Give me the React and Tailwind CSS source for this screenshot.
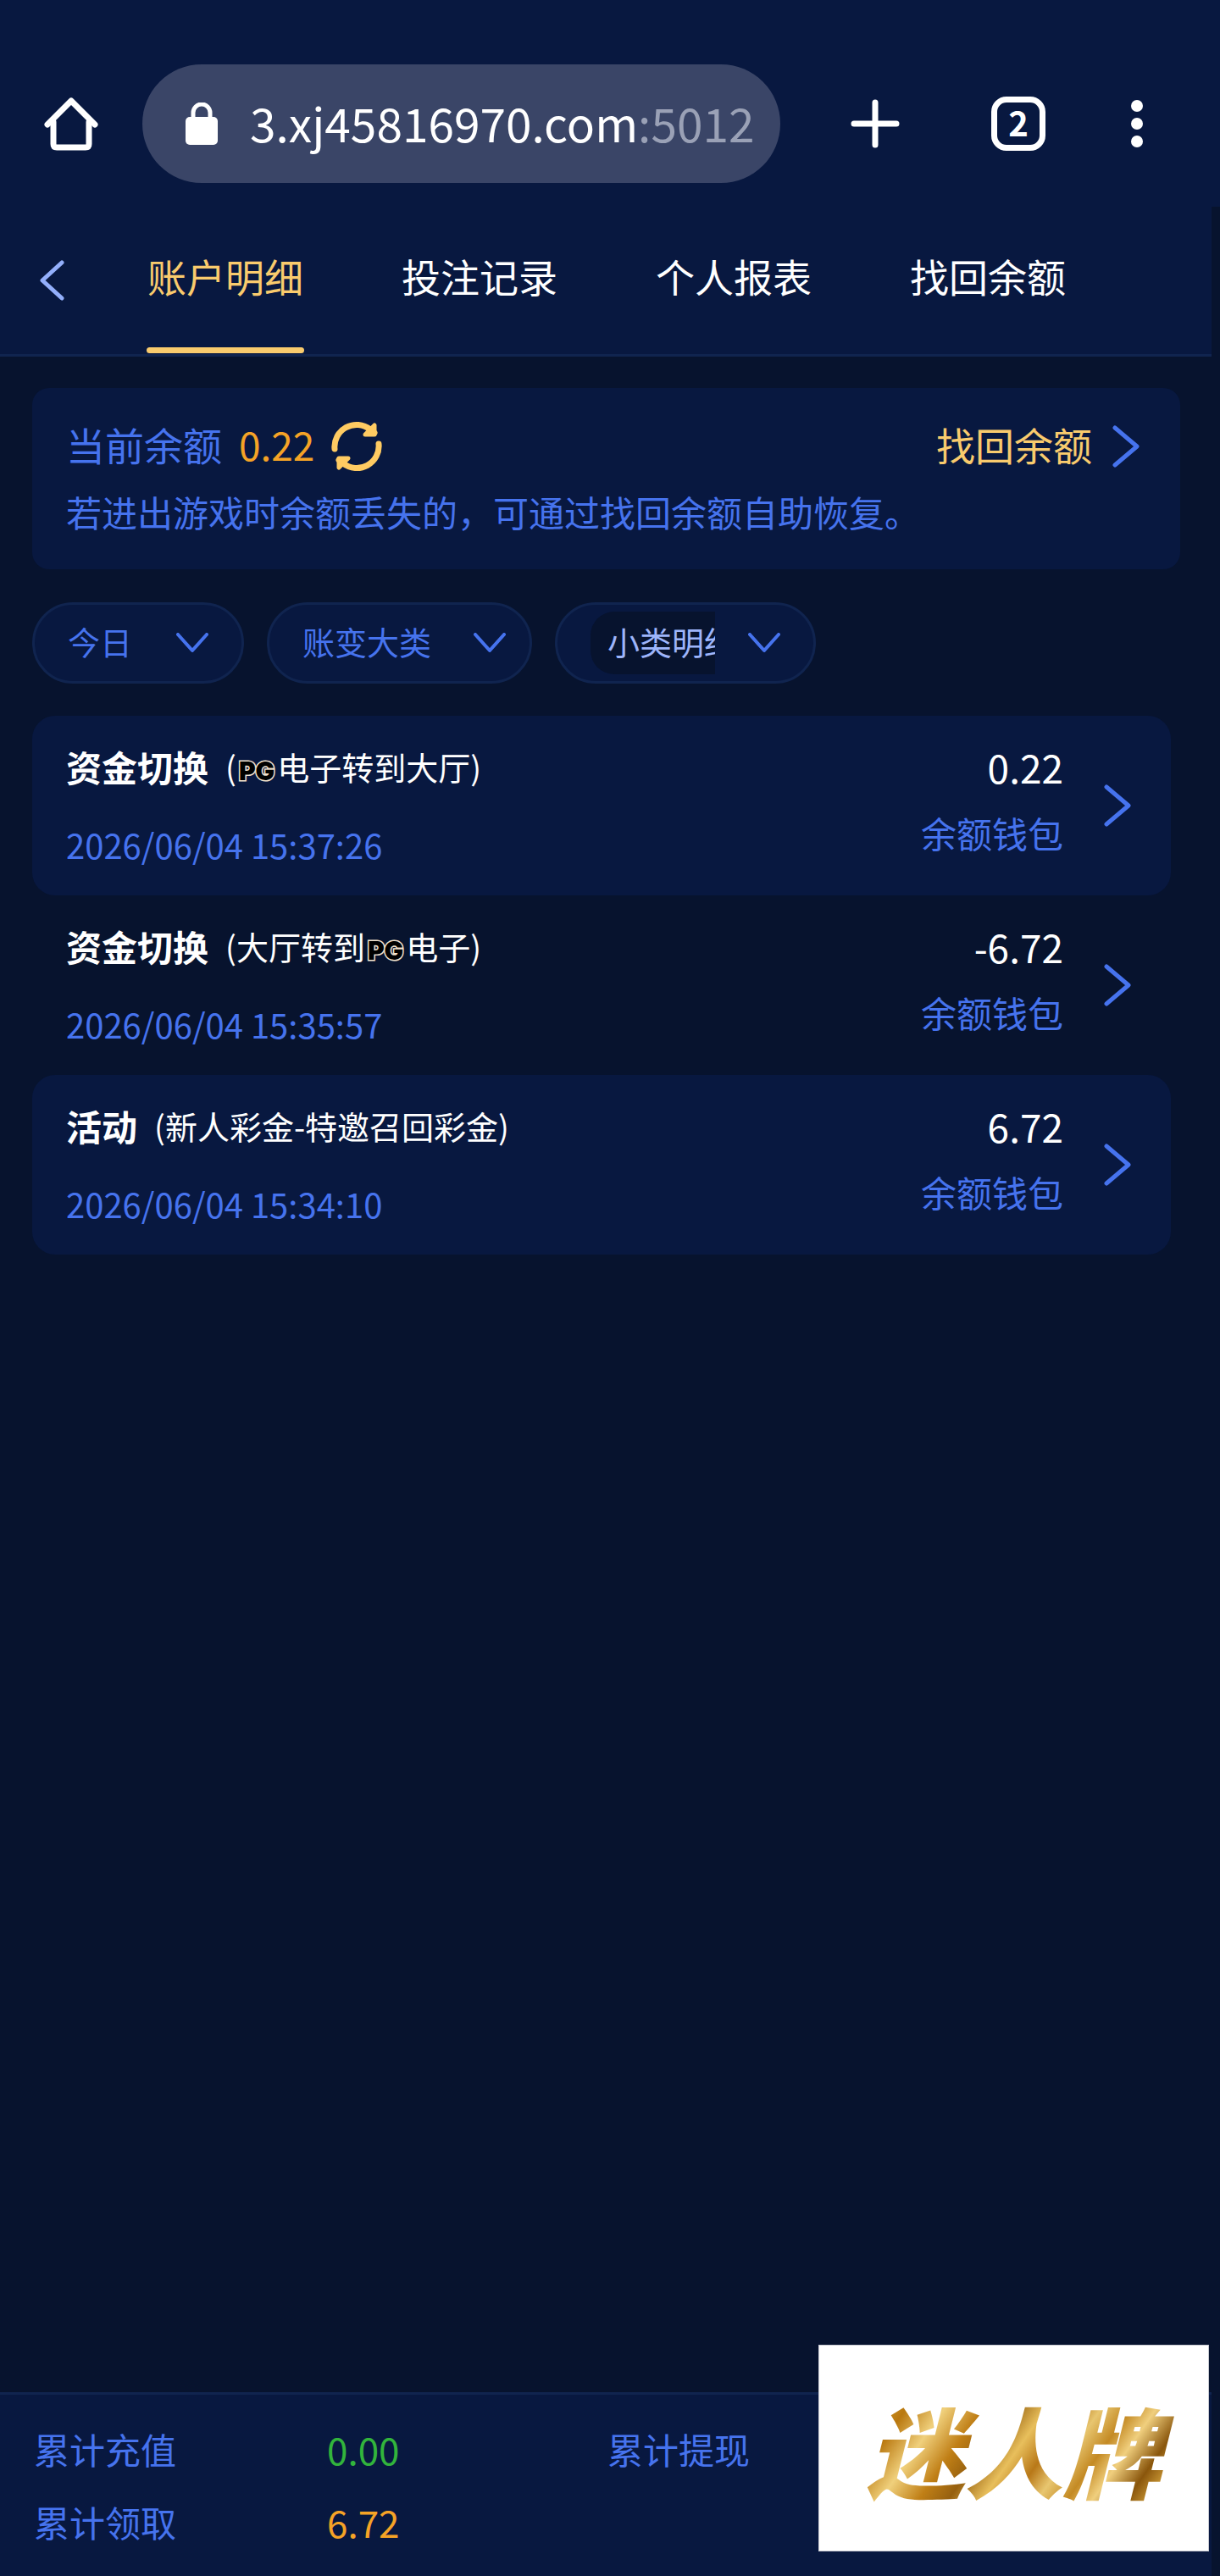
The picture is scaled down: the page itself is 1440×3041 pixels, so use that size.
import { useState } from "react";

const TABS = ["账户明细", "投注记录", "个人报表", "找回余额"];

const RECORDS = [
  {
    id: 1,
    type: "资金切换",
    before: "",
    logo: true,
    after: "电子转到大厅",
    time: "2026/06/04 15:37:26",
    amount: "0.22",
    wallet: "余额钱包",
  },
  {
    id: 2,
    type: "资金切换",
    before: "大厅转到",
    logo: true,
    after: "电子",
    time: "2026/06/04 15:35:57",
    amount: "-6.72",
    wallet: "余额钱包",
  },
  {
    id: 3,
    type: "活动",
    before: "新人彩金-特邀召回彩金",
    logo: false,
    after: "",
    time: "2026/06/04 15:34:10",
    amount: "6.72",
    wallet: "余额钱包",
  },
];

function ChevronRight() {
  return (
    <svg width="32" height="50" viewBox="0 0 32 50" fill="none" className="shrink-0">
      <path d="M3 3 L29 25 L3 47" stroke="#4673ee" strokeWidth="5" strokeLinecap="round" strokeLinejoin="round" />
    </svg>
  );
}

function ChevronDown() {
  return (
    <svg width="38" height="24" viewBox="0 0 38 24" fill="none" className="pointer-events-none shrink-0">
      <path d="M2 2 L19 21 L36 2" stroke="#4673ee" strokeWidth="4" strokeLinecap="round" strokeLinejoin="round" />
    </svg>
  );
}

function BrowserBar() {
  return (
    <header className="flex items-center bg-[#081840] pt-[76px] pb-7 pl-[50px] pr-[84px]">
      <button aria-label="主页" className="w-[118px] shrink-0">
        <svg width="68" height="68" viewBox="0 0 68 68" fill="none" stroke="#fff" strokeWidth="7" strokeLinecap="round" strokeLinejoin="round">
          <path d="M13 32 V58 Q13 62 17 62 H51 Q55 62 55 58 V32" />
          <path d="M6 35 L34 7 L62 35" />
        </svg>
      </button>

      <button aria-label="网址" className="flex h-[140px] flex-1 items-center rounded-full bg-[#3a4567] pl-[51px] text-left">
        <svg width="38" height="50" viewBox="0 0 38 50" className="mr-[38px] shrink-0">
          <rect x="0" y="17" width="38" height="33" rx="5" fill="#fff" />
          <path d="M9 20 V12 A10 10 0 0 1 29 12 V20" fill="none" stroke="#fff" strokeWidth="5" />
        </svg>
        <span className="pb-1 whitespace-nowrap text-[55px] leading-[80px] text-white">
          3.xj45816970.com<span className="text-[#9aa1b6]">:5012</span>
        </span>
      </button>

      <div className="ml-20 flex shrink-0 items-center">
        <button aria-label="新标签页" className="mr-[105px]">
          <svg width="64" height="64" viewBox="0 0 64 64" stroke="#fff" strokeWidth="7" strokeLinecap="round">
            <path d="M32 7 V57 M7 32 H57" />
          </svg>
        </button>
        <button
          aria-label="标签页"
          className="mr-[94px] flex h-16 w-16 items-center justify-center rounded-[18px] border-[7px] border-white pb-1 text-[40px] leading-[40px] font-bold text-white"
        >
          2
        </button>
        <button aria-label="更多">
          <svg width="28" height="64" viewBox="0 0 28 64" fill="#fff">
            <circle cx="14" cy="11" r="7" />
            <circle cx="14" cy="32" r="7" />
            <circle cx="14" cy="53" r="7" />
          </svg>
        </button>
      </div>
    </header>
  );
}

function TabBar({ active, onChange }) {
  return (
    <nav className="mr-[10px] flex h-[177px] border-b-[3px] border-[#10244f] bg-[#081840] pl-[46px]">
      <button aria-label="返回" className="w-[127px] shrink-0">
        <svg width="30" height="48" viewBox="0 0 30 48" fill="none">
          <path d="M27 3 L4 24 L27 45" stroke="#93affb" strokeWidth="5" strokeLinecap="round" strokeLinejoin="round" />
        </svg>
      </button>
      <div className="flex gap-[114px]">
        {TABS.map((tab) => (
          <button
            key={tab}
            onClick={() => onChange(tab)}
            className={
              tab === active
                ? "flex w-[186px] flex-col items-center justify-between pt-12 text-[46px] leading-[66px] text-[#f9cb6d]"
                : "flex w-[186px] flex-col items-center justify-between pt-12 text-[46px] leading-[66px] text-white"
            }
          >
            <span className="whitespace-nowrap">{tab}</span>
            {tab === active && <span className="mb-px h-[7px] w-full rounded-sm bg-[#f9cb6d]" />}
          </button>
        ))}
      </div>
    </nav>
  );
}

function BalanceCard() {
  return (
    <section className="rounded-[20px] bg-[#081840] px-10 pt-[34px] pb-9">
      <div className="flex items-center justify-between">
        <div className="flex items-center text-[46px] leading-[64px]">
          <span className="pb-[6px] text-[#4673ee]">当前余额</span>
          <span className="ml-5 pb-[6px] text-[#f5a326]">0.22</span>
          <button aria-label="刷新" className="ml-5">
            <svg width="60" height="60" viewBox="0 0 60 60" fill="none" stroke="#ffcb62" strokeWidth="7" strokeLinecap="round" strokeLinejoin="round">
              <path d="M4 33 A26 26 0 0 1 46 10 L51 14" />
              <path d="M51 5 V16 H40 Z" fill="#ffcb62" strokeWidth="5" />
              <path d="M56 27 A26 26 0 0 1 14 50 L9 46" />
              <path d="M9 55 V44 H20 Z" fill="#ffcb62" strokeWidth="5" />
            </svg>
          </button>
        </div>
        <a href="#recover" className="flex items-center gap-6 pr-2 text-[46px] leading-[64px] text-[#f9cb6d]">
          <span className="pb-[6px]">找回余额</span>
          <ChevronRight />
        </a>
      </div>
      <p className="mt-[10px] text-[42px] leading-[64px] text-[#4673ee]">若进出游戏时余额丢失的，可通过找回余额自助恢复。</p>
    </section>
  );
}

function Filters() {
  return (
    <div className="mt-[39px] flex gap-[27px] text-[38px]">
      <label className="flex h-24 w-[250px] items-center justify-between rounded-full border-[3px] border-[#10244f] bg-[#081840] px-[39px]">
        <select aria-label="日期" className="w-[76px] appearance-none pb-[6px] text-[#4673ee]">
          <option>今日</option>
        </select>
        <ChevronDown />
      </label>
      <label className="flex h-24 w-[313px] items-center justify-between rounded-full border-[3px] border-[#10244f] bg-[#081840] pl-[39px] pr-7">
        <select aria-label="账变大类" className="w-[152px] appearance-none pb-[6px] text-[#4673ee]">
          <option>账变大类</option>
        </select>
        <ChevronDown />
      </label>
      <label className="flex h-24 w-[308px] items-center justify-between rounded-full border-[3px] border-[#10244f] bg-[#081840] px-[39px]">
        <select
          aria-label="小类明细"
          className="h-[74px] w-[147px] appearance-none overflow-hidden rounded-l-[28px] bg-[#07132e] pb-[6px] pl-5 text-[#9db5fb]"
        >
          <option>小类明细</option>
        </select>
        <ChevronDown />
      </label>
    </div>
  );
}

function PgMark() {
  return (
    <span className="mx-[3px] font-['Inter'] text-[30px] leading-[30px] font-black text-black [-webkit-text-stroke:3px_#f3e3cf] [paint-order:stroke]">
      PG
    </span>
  );
}

function RecordRow({ record }) {
  return (
    <li className="rounded-[27px] odd:bg-[#081840]">
      <a href={`#record-${record.id}`} className="flex h-[212px] items-center pl-10 pr-[47px]">
        <div className="flex-1">
          <div className="flex items-center leading-[64px] text-white">
            <span className="text-[42px] font-bold">{record.type}</span>
            <span className="ml-5 text-[38px]">
              ({record.before}
              {record.logo && <PgMark />}
              {record.after})
            </span>
          </div>
          <div className="mt-7 text-[40px] leading-[64px] text-[#4673ee]">{record.time}</div>
        </div>
        <div className="mr-12 pb-[14px] text-right">
          <div className="text-[46px] leading-[64px] text-white">{record.amount}</div>
          <div className="mt-[14px] text-[42px] leading-[64px] text-[#4673ee]">{record.wallet}</div>
        </div>
        <ChevronRight />
      </a>
    </li>
  );
}

function Totals() {
  return (
    <footer className="mr-[10px] border-t-[3px] border-[#10244f] bg-[#081840] pl-10 pt-8 pb-8">
      <dl className="grid grid-cols-[346px_331px_346px_1fr] gap-y-[22px] text-[42px] leading-[64px] text-[#4673ee]">
        <dt>累计充值</dt>
        <dd className="text-[44px] text-[#32b43c]">0.00</dd>
        <dt>累计提现</dt>
        <dd />
        <dt>累计领取</dt>
        <dd className="text-[44px] text-[#f5a326]">6.72</dd>
      </dl>
    </footer>
  );
}

export default function App() {
  const [active, setActive] = useState("账户明细");

  return (
    <div className="relative flex min-h-screen flex-col bg-[#07132e] font-['Noto_Sans_CJK_SC',sans-serif]">
      <BrowserBar />
      <TabBar active={active} onChange={setActive} />

      <main className="flex-1 pt-[37px] pl-[38px] pr-[47px]">
        <BalanceCard />
        <Filters />
        <ul className="mt-[38px] mr-[11px]">
          {RECORDS.map((record) => (
            <RecordRow key={record.id} record={record} />
          ))}
        </ul>
      </main>

      <Totals />

      {/* floating site logo */}
      <div className="absolute right-[13px] bottom-[29px] flex h-[244px] w-[461px] items-center justify-center border border-[#c9cbd3] bg-white">
        <span className="bg-[linear-gradient(125deg,#a86f10_0%,#d9a032_10%,#b9780f_18%,#f0d07c_27%,#c07f16_36%,#96600f_43%,#e8bf5c_51%,#b87818_58%,#e8c670_64%,#c48a24_71%,#f0cf7e_77%,#8a560c_85%,#d9a840_92%,#a46c12_100%)] bg-clip-text px-6 text-[116px] leading-[150px] font-black text-transparent italic">
          迷人牌
        </span>
      </div>
    </div>
  );
}
